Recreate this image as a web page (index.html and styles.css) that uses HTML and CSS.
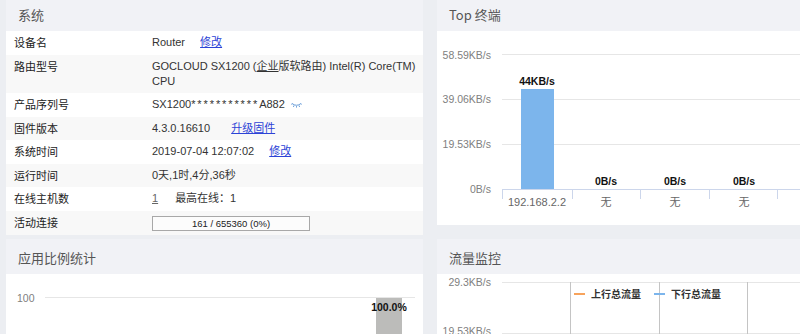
FILE: index.html
```html
<!DOCTYPE html>
<html>
<head>
  <title>系统状态</title>
  <link rel="stylesheet" href="styles.css">
</head>
<body>
  <div class="dashboard">

    <!-- 系统信息 -->
    <section class="panel panel-system">
      <div class="panel-head">系统</div>
      <table class="info">
        <tr><td class="info-label">设备名</td><td>Router <a class="info-link" href="#">修改</a></td></tr>
        <tr><td class="info-label">路由型号</td><td>GOCLOUD SX1200 (<u>企业</u>版软路由) Intel(R) Core(TM) CPU</td></tr>
        <tr><td class="info-label">产品序列号</td><td>SX1200<span class="stars">***********</span>A882
          <svg class="eye" width="11" height="6" viewBox="0 0 11 6"><path d="M1 1.5 Q5.5 5 10 1.5 M3 3.4 L2.4 5 M5.5 4.1 L5.5 5.6 M8 3.4 L8.6 5 M1 1.5 L0.3 2.6 M10 1.5 L10.7 2.6" fill="none" stroke="#6c9fd9" stroke-width="1"/></svg>
        </td></tr>
        <tr><td class="info-label">固件版本</td><td>4.3.0.16610 <a class="info-link link-wide" href="#">升级固件</a></td></tr>
        <tr><td class="info-label">系统时间</td><td>2019-07-04 12:07:02 <a class="info-link" href="#">修改</a></td></tr>
        <tr><td class="info-label">运行时间</td><td>0天,1时,4分,36秒</td></tr>
        <tr><td class="info-label">在线主机数</td><td><span class="host-count">1</span><span class="host-max">最高在线：1</span></td></tr>
        <tr><td class="info-label">活动连接</td><td><div class="conn-bar">161 / 655360 (0%)</div></td></tr>
      </table>
    </section>

    <!-- Top 终端 -->
    <section class="panel panel-top">
      <div class="panel-head">Top 终端</div>
      <div class="panel-body chart-top">
        <svg width="417" height="194" class="chart">
          <g stroke="#e6e6e6">
            <line x1="65" y1="23.5" x2="417" y2="23.5"/>
            <line x1="65" y1="68.5" x2="417" y2="68.5"/>
            <line x1="65" y1="113.5" x2="417" y2="113.5"/>
          </g>
          <g class="axis-y" text-anchor="end">
            <text x="54" y="28">58.59KB/s</text>
            <text x="54" y="72">39.06KB/s</text>
            <text x="54" y="117">19.53KB/s</text>
            <text x="54" y="162">0B/s</text>
          </g>
          <rect x="84" y="58" width="33" height="100" fill="#7cb5ec"/>
          <g stroke="#ccd6eb">
            <line x1="65" y1="158.5" x2="417" y2="158.5"/>
            <line x1="65.5" y1="158" x2="65.5" y2="168"/>
            <line x1="135.5" y1="158" x2="135.5" y2="168"/>
            <line x1="203.5" y1="158" x2="203.5" y2="168"/>
            <line x1="272.5" y1="158" x2="272.5" y2="168"/>
            <line x1="340.5" y1="158" x2="340.5" y2="168"/>
          </g>
          <g class="bar-label" text-anchor="middle">
            <text x="100" y="54">44KB/s</text>
            <text x="169" y="154">0B/s</text>
            <text x="238" y="154">0B/s</text>
            <text x="307" y="154">0B/s</text>
          </g>
          <g class="axis-x" text-anchor="middle">
            <text x="100" y="175">192.168.2.2</text>
            <text x="169" y="175">无</text>
            <text x="238" y="175">无</text>
            <text x="307" y="175">无</text>
          </g>
        </svg>
      </div>
    </section>

    <!-- 应用比例统计 -->
    <section class="panel panel-app">
      <div class="panel-head">应用比例统计</div>
      <div class="panel-body">
        <svg width="417" height="62" class="chart">
          <text class="axis-y" x="11" y="28">100</text>
          <line x1="39" y1="23.5" x2="409" y2="23.5" stroke="#e6e6e6"/>
          <rect x="370" y="24" width="26" height="40" fill="#bcbcba"/>
          <text class="bar-label" x="383" y="37" text-anchor="middle">100.0%</text>
        </svg>
      </div>
    </section>

    <!-- 流量监控 -->
    <section class="panel panel-flow">
      <div class="panel-head">流量监控</div>
      <div class="panel-body">
        <svg width="363" height="62" class="chart">
          <g stroke="#e6e6e6">
            <line x1="65" y1="8.5" x2="363" y2="8.5"/>
            <line x1="65" y1="59.5" x2="363" y2="59.5"/>
          </g>
          <g stroke="#c4c4c4">
            <line x1="133.5" y1="8" x2="133.5" y2="62"/>
            <line x1="222.5" y1="8" x2="222.5" y2="62"/>
            <line x1="310.5" y1="8" x2="310.5" y2="62"/>
          </g>
          <g class="axis-y" text-anchor="end">
            <text x="54" y="12">29.3KB/s</text>
            <text x="54" y="61">19.53KB/s</text>
          </g>
          <line x1="137" y1="20" x2="148" y2="20" stroke="#f7a35c" stroke-width="2"/>
          <text class="legend" x="154" y="24">上行总流量</text>
          <line x1="217" y1="20" x2="228" y2="20" stroke="#7cb5ec" stroke-width="2"/>
          <text class="legend" x="234" y="24">下行总流量</text>
        </svg>
      </div>
    </section>

  </div>
</body>
</html>
```

FILE: styles.css
```css
html, body {
  margin: 0;
  padding: 0;
}

body {
  background-color: #eceef2;
  font-family: "Liberation Sans", "Noto Sans CJK SC", sans-serif;
  font-size: 11px;
  color: #333;
  overflow: hidden;
  height: 334px;
}

.dashboard {
  display: grid;
  grid-template-columns: 417px 363px;
  column-gap: 14px;
  row-gap: 4px;
  align-items: start;
  padding-left: 6px;
  margin-top: -4px;
}

.panel {
  background-color: #fff;
}

.panel-head {
  height: 35px;
  line-height: 38px;
  padding-left: 12px;
  background-color: #f1f2f6;
  font-family: "Noto Sans CJK SC", sans-serif;
  font-size: 13px;
  color: #555;
}

/* 系统信息表 */
.info {
  width: 100%;
  border-collapse: collapse;
}

.info td {
  padding: 4px 0 4.5px;
  line-height: 15px;
  vertical-align: top;
}

.info tr:nth-child(even) td {
  background-color: #f8f8f8;
}

.info-label {
  width: 138px;
  padding-left: 8px !important;
  font-family: "Noto Sans CJK SC", sans-serif;
  font-size: 11px;
  color: #222;
}

.info-link {
  margin-left: 12px;
  color: #2c43d6;
  font-size: 11px;
}

.link-wide {
  margin-left: 18px;
}

.stars {
  letter-spacing: 1.9px;
}

.eye {
  margin-left: 3px;
  vertical-align: middle;
}

.host-count {
  text-decoration: underline;
  color: #666;
}

.host-max {
  margin-left: 17px;
}

.conn-bar {
  width: 156px;
  height: 13px;
  margin-top: 1px;
  border: 1px solid #a8a8a8;
  background-color: #fcfcfc;
  text-align: center;
  line-height: 14px;
  font-size: 9.5px;
  color: #222;
}

/* 图表 */
.panel-body {
  overflow: hidden;
}

.chart-top {
  height: 194px;
}

.chart {
  display: block;
  font-family: "Liberation Sans", "Noto Sans CJK SC", sans-serif;
}

.axis-y text,
text.axis-y {
  font-size: 10.5px;
  fill: #808080;
}

.axis-x text {
  font-size: 11px;
  fill: #666;
}

.bar-label text,
text.bar-label {
  font-size: 10.5px;
  font-weight: bold;
  fill: #111;
}

.legend {
  font-family: "Noto Sans CJK SC", sans-serif;
  font-size: 10px;
  font-weight: bold;
  fill: #333;
}
```
